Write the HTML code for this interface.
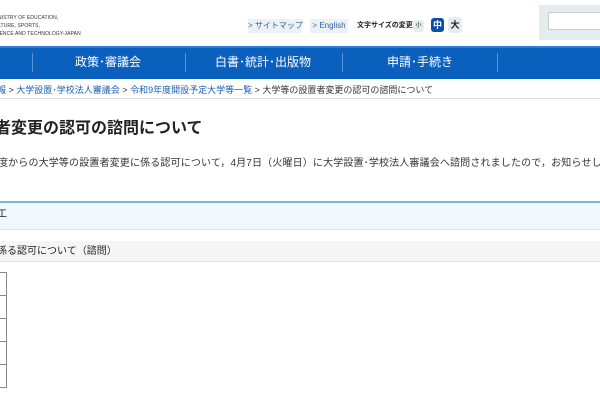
<!DOCTYPE html>
<html><head><meta charset="utf-8"><style>
*{margin:0;padding:0;box-sizing:border-box}
body{width:600px;height:400px;overflow:hidden;background:#fff;font-family:"Liberation Sans","Noto Sans CJK JP",sans-serif;position:relative;color:#222}
.a{position:absolute;white-space:nowrap}
</style></head><body>
<div class="a" style="left:-2px;top:14px;font-size:5px;line-height:8px;color:#333;letter-spacing:.1px">NISTRY OF EDUCATION,<br>LTURE, SPORTS,<br>IENCE AND TECHNOLOGY-JAPAN</div>
<div class="a" style="left:248px;top:19px;width:53px;height:14px;background:#eef1f3;font-size:8px;line-height:14px;color:#2a64a8;text-align:center">&gt; サイトマップ</div>
<div class="a" style="left:310px;top:19px;width:38px;height:14px;background:#eef1f3;font-size:8px;line-height:14px;color:#2a64a8;text-align:center">&gt; English</div>
<div class="a" style="left:357px;top:21px;font-size:7px;font-weight:bold;line-height:10px">文字サイズの変更</div>
<div class="a" style="left:413px;top:20px;width:11px;height:12px;border-radius:3px;background:#e5ecf0;font-size:6px;line-height:12px;text-align:center">小</div>
<div class="a" style="left:431px;top:18px;width:13px;height:14px;border-radius:3px;background:#0b4ea2;color:#fff;font-size:9px;font-weight:bold;line-height:14px;text-align:center">中</div>
<div class="a" style="left:448px;top:17px;width:14px;height:16px;border-radius:3px;background:#e5ecf0;font-size:9px;font-weight:bold;line-height:16px;text-align:center">大</div>
<div class="a" style="left:539px;top:5px;width:61px;height:35px;background:#e5ecf0"></div>
<div class="a" style="left:548px;top:12px;width:60px;height:18px;background:#fff;border:1px solid #ccc"></div>
<div class="a" style="left:0;top:46px;width:600px;height:33px;background:#0b5fbd;border-top:2px solid #2a80d6"></div>
<div class="a" style="left:32px;top:53px;width:1px;height:19px;background:#5d95d4"></div>
<div class="a" style="left:185px;top:53px;width:1px;height:19px;background:#5d95d4"></div>
<div class="a" style="left:342px;top:53px;width:1px;height:19px;background:#5d95d4"></div>
<div class="a" style="left:497px;top:53px;width:1px;height:19px;background:#5d95d4"></div>
<div class="a" style="left:58px;top:54px;width:100px;text-align:center;color:#fff;font-size:12px;line-height:16px">政策･審議会</div>
<div class="a" style="left:213px;top:54px;width:100px;text-align:center;color:#fff;font-size:12px;line-height:16px">白書･統計･出版物</div>
<div class="a" style="left:370px;top:54px;width:100px;text-align:center;color:#fff;font-size:12px;line-height:16px">申請･手続き</div>
<div class="a" style="left:-3px;top:84px;font-size:9px;line-height:12px;color:#333"><span style="color:#1a5fb0">報</span> &gt; <span style="color:#1a5fb0">大学設置･学校法人審議会</span> &gt; <span style="color:#1a5fb0">令和9年度開設予定大学等一覧</span> &gt; 大学等の設置者変更の認可の諮問について</div>
<div class="a" style="left:0;top:98px;width:600px;height:1px;background:#ddd"></div>
<div class="a" style="left:-5px;top:119px;font-size:16px;font-weight:bold;line-height:20px;color:#222">者変更の認可の諮問について</div>
<div class="a" style="left:-2px;top:157px;font-size:10px;line-height:13px;color:#333;letter-spacing:.15px">度からの大学等の設置者変更に係る認可について，4月7日（火曜日）に大学設置･学校法人審議会へ諮問されましたので，お知らせします。</div>
<div class="a" style="left:0;top:201px;width:600px;height:29px;background:#f1f8fb;border-top:2px solid #7bbcd3;border-bottom:1px solid #dde6ea"></div>
<div class="a" style="left:-3px;top:209px;font-size:10px;line-height:12px">工</div>
<div class="a" style="left:0;top:241px;width:600px;height:21px;background:#f5f5f5;border-bottom:1px solid #e0e0e0"></div>
<div class="a" style="left:-3px;top:245px;font-size:10px;line-height:14px;color:#222">係る認可について（諮問）</div>
<div class="a" style="left:-1px;top:272px;width:8px;height:116px;border:1px solid #888;background:repeating-linear-gradient(#fff 0 22px,#888 22px 23px)"></div>
</body></html>
